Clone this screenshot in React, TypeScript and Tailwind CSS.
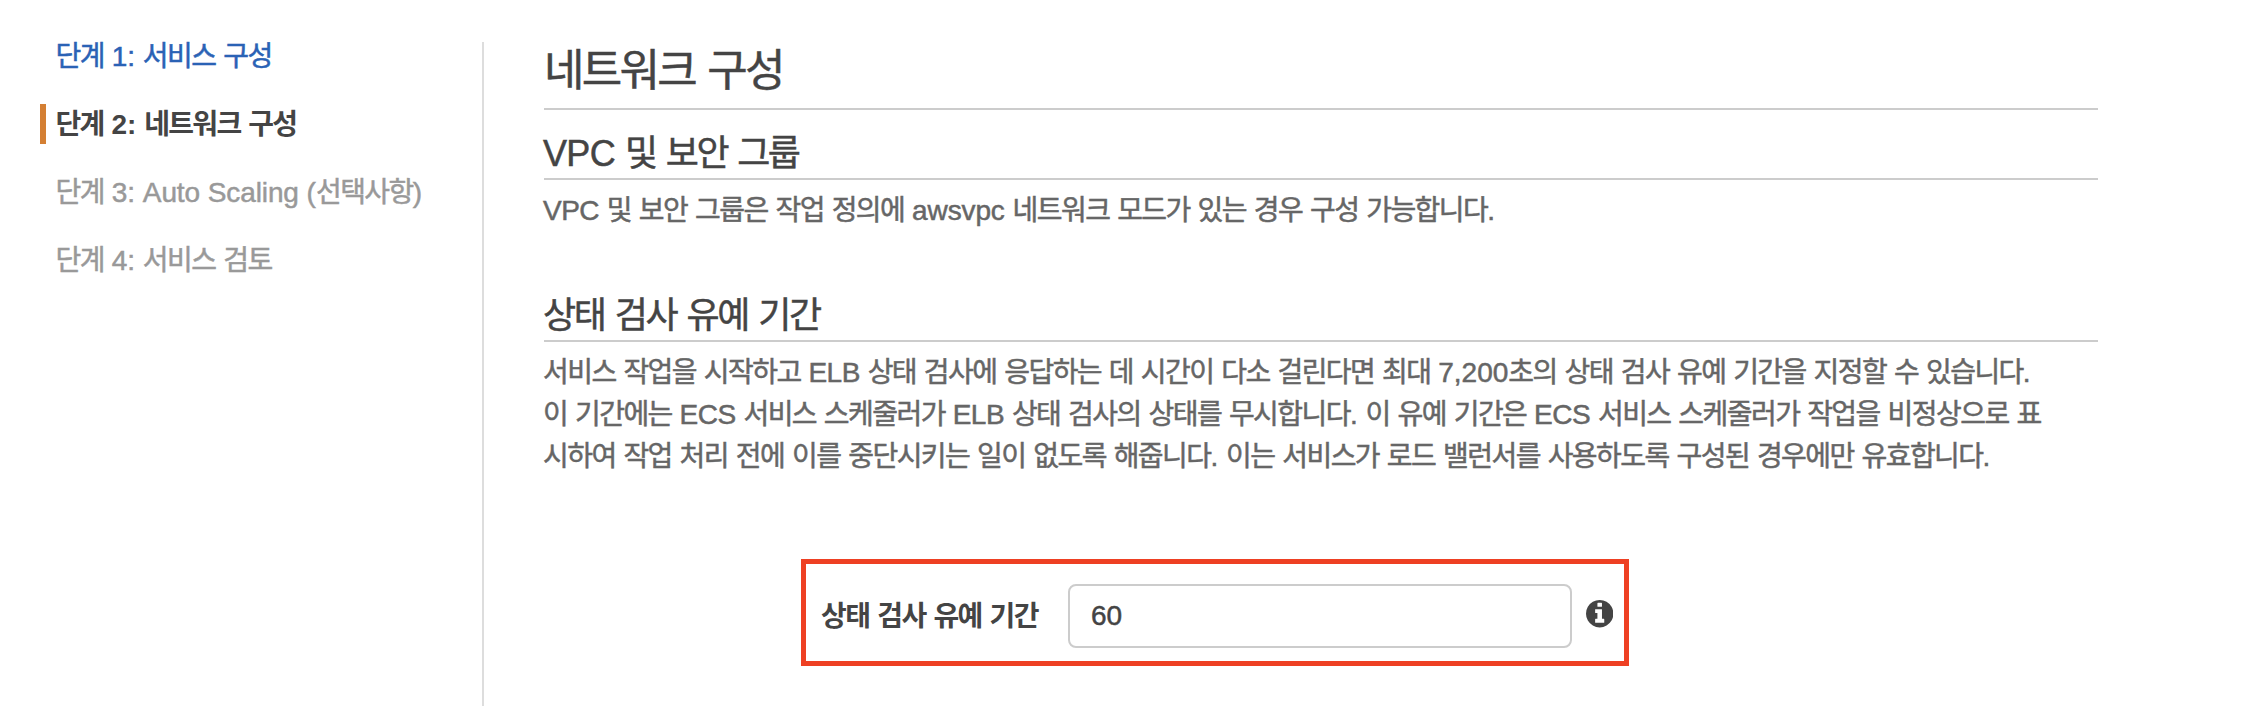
import React from "react";

const RUNS = /([\uAC00-\uD7A3]+|[A-Za-z]+)/;

/** Text whose Hangul, capital and lower-case runs each have their own tracking. */
function Mixed({ children, hangul = "tracking-[-0.0555em]" }: { children: string; hangul?: string }) {
  return (
    <>
      {children.split(RUNS).map((part, i) => {
        if (!RUNS.test(part)) return part;
        const style = /[a-z]/.test(part)
          ? "tracking-[-0.004em]"
          : /[A-Z]/.test(part)
            ? "tracking-[-0.018em]"
            : hangul;
        return (
          <span key={i} className={style}>
            {part}
          </span>
        );
      })}
    </>
  );
}

function InfoIcon({ className }: { className: string }) {
  return (
    <svg viewBox="128 128 1536 1536" fill="currentColor" className={className}>
      <path d="M1152 1376v-160q0-14-9-23t-23-9h-96v-512q0-14-9-23t-23-9h-320q-14 0-23 9t-9 23v160q0 14 9 23t23 9h96v320h-96q-14 0-23 9t-9 23v160q0 14 9 23t23 9h448q14 0 23-9t9-23zm-128-896v-160q0-14-9-23t-23-9h-192q-14 0-23 9t-9 23v160q0 14 9 23t23 9h192q14 0 23-9t9-23zm640 416q0 209-103 385.5t-279.5 279.5-385.5 103-385.5-103-279.5-279.5-103-385.5 103-385.5 279.5-279.5 385.5-103 385.5 103 279.5 279.5 103 385.5z" />
    </svg>
  );
}

const steps = [
  { label: "단계 1: 서비스 구성", style: "border-transparent text-[#2a62b5]" },
  {
    label: "단계 2: 네트워크 구성",
    style: "border-[#d47f33] font-bold text-[#444444] [-webkit-text-stroke:0px]",
    hangul: "tracking-[-0.06em]",
  },
  { label: "단계 3: Auto Scaling (선택사항)", style: "border-transparent text-[#999999]" },
  { label: "단계 4: 서비스 검토", style: "border-transparent text-[#999999]" },
];

const graceText = [
  "서비스 작업을 시작하고 ELB 상태 검사에 응답하는 데 시간이 다소 걸린다면 최대 7,200초의 상태 검사 유예 기간을 지정할 수 있습니다.",
  "이 기간에는 ECS 서비스 스케줄러가 ELB 상태 검사의 상태를 무시합니다. 이 유예 기간은 ECS 서비스 스케줄러가 작업을 비정상으로 표",
  "시하여 작업 처리 전에 이를 중단시키는 일이 없도록 해줍니다. 이는 서비스가 로드 밸런서를 사용하도록 구성된 경우에만 유효합니다.",
];

export default function App() {
  return (
    <div className="flex h-[706px] w-[2252px] overflow-hidden bg-white pt-[42px] font-['Liberation_Sans','Noto_Sans_CJK_KR',sans-serif] text-[28px] leading-[42px] whitespace-nowrap text-[#666666] [-webkit-text-stroke:0.5px]">
      <nav className="w-[482px] shrink-0 pl-10">
        <ul className="-mt-1.5 flex flex-col gap-7">
          {steps.map((s) => (
            <li key={s.label} className={`h-10 border-l-6 pl-[9.5px] leading-[42px] ${s.style}`}>
              <Mixed hangul={s.hangul}>{s.label}</Mixed>
            </li>
          ))}
        </ul>
      </nav>

      <main className="flex-1 border-l-2 border-[#dddddd] pl-[60px]">
        <div className="w-[1554px]">
          <h1 className="h-[68px] border-b-2 border-[#cccccc] text-[44px] leading-[58px] text-[#444444]">
            <Mixed hangul="tracking-[-0.062em]">네트워크 구성</Mixed>
          </h1>
          <h2 className="mt-5 h-[50px] border-b-2 border-[#cccccc] text-[36px] leading-[47px] text-[#444444]">
            <span className="-ml-px">
              <Mixed hangul="tracking-[-0.068em]">VPC 및 보안 그룹</Mixed>
            </span>
          </h2>
          <p className="-ml-px mt-2.5">
            <Mixed>VPC 및 보안 그룹은 작업 정의에 awsvpc 네트워크 모드가 있는 경우 구성 가능합니다.</Mixed>
          </p>
          <h2 className="mt-15 h-[50px] border-b-2 border-[#cccccc] text-[36px] leading-[47px] text-[#444444]">
            <span className="-ml-px">
              <Mixed hangul="tracking-[-0.063em]">상태 검사 유예 기간</Mixed>
            </span>
          </h2>
          <div className="-ml-px mt-2.5">
            {graceText.map((line) => (
              <p key={line}>
                <Mixed>{line}</Mixed>
              </p>
            ))}
          </div>

          <div className="mt-[81px] ml-[257px] flex h-[107px] w-[828px] items-center border-5 border-[#ee4023] pt-[7px] pl-[15px] text-[#444444]">
            <label htmlFor="grace" className="w-[247px] pt-0.5 font-bold [-webkit-text-stroke:0px]">
              <Mixed>상태 검사 유예 기간</Mixed>
            </label>
            <input
              id="grace"
              defaultValue="60"
              className="h-16 w-[504px] rounded-lg border-2 border-[#cccccc] bg-white px-[21px]"
            />
            <InfoIcon className="-mt-1 ml-3.5 size-[27.4px]" />
          </div>
        </div>
      </main>
    </div>
  );
}
